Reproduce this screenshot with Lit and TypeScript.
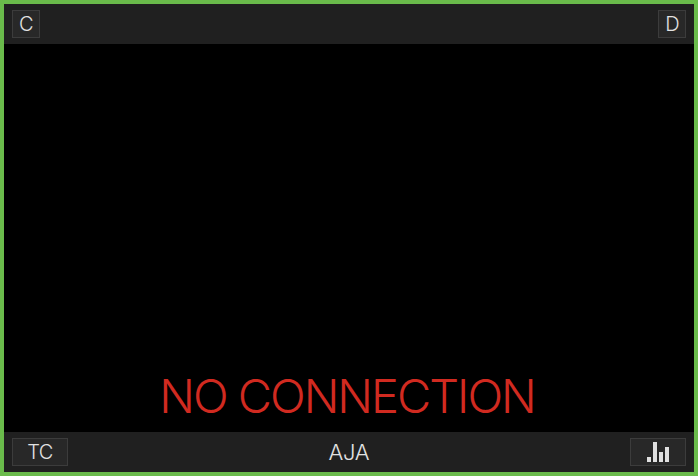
import { LitElement, html, css } from "lit";
import { customElement } from "lit/decorators.js";

@customElement("app-root")
export class AppRoot extends LitElement {
  static styles = css`
    :host {
      display: block;
      width: 698px;
      height: 476px;
      font-family: Inter, "Liberation Sans", sans-serif;
    }
    .frame {
      box-sizing: border-box;
      width: 698px;
      height: 476px;
      border: 4px solid #6abb4b;
      background: #000;
      display: flex;
      flex-direction: column;
    }
    .bar {
      box-sizing: border-box;
      height: 40px;
      flex: none;
      background: #202020;
      display: flex;
      align-items: center;
      justify-content: space-between;
      padding: 0 8px;
      color: #ddd;
    }
    .btn {
      box-sizing: border-box;
      height: 28px;
      width: 28px;
      border: 1px solid #3c3c3c;
      background: #282828;
      display: flex;
      align-items: center;
      justify-content: center;
      font-size: 20px;
      font-weight: 350;
      letter-spacing: -0.7px;
      line-height: 28px;
      color: #e2e2e2;
    }
    .btn.wide {
      width: 56px;
    }
    .main {
      flex: 1;
      display: flex;
      align-items: flex-end;
      justify-content: center;
    }
    .msg {
      font-size: 47px;
      font-weight: 350;
      line-height: 56px;
      padding: 0 4px 8px 0;
      letter-spacing: -2px;
      color: #d12a20;
      white-space: nowrap;
    }
    .title {
      font-size: 22px;
      font-weight: 350;
      letter-spacing: -0.3px;
      color: #e2e2e2;
    }
    svg {
      display: block;
    }
  `;

  render() {
    return html`
      <div class="frame">
        <div class="bar">
          <div class="btn">C</div>
          <div class="btn">D</div>
        </div>
        <div class="main"><div class="msg">NO CONNECTION</div></div>
        <div class="bar">
          <div class="btn wide">TC</div>
          <div class="title">AJA</div>
          <div class="btn wide">
            <svg width="22" height="20" viewBox="0 0 22 20" fill="#e0e0e0">
              <rect x="0" y="15" width="4" height="5"></rect>
              <rect x="6" y="0" width="4" height="20"></rect>
              <rect x="12" y="10" width="4" height="10"></rect>
              <rect x="18" y="5" width="4" height="15"></rect>
            </svg>
          </div>
        </div>
      </div>
    `;
  }
}
